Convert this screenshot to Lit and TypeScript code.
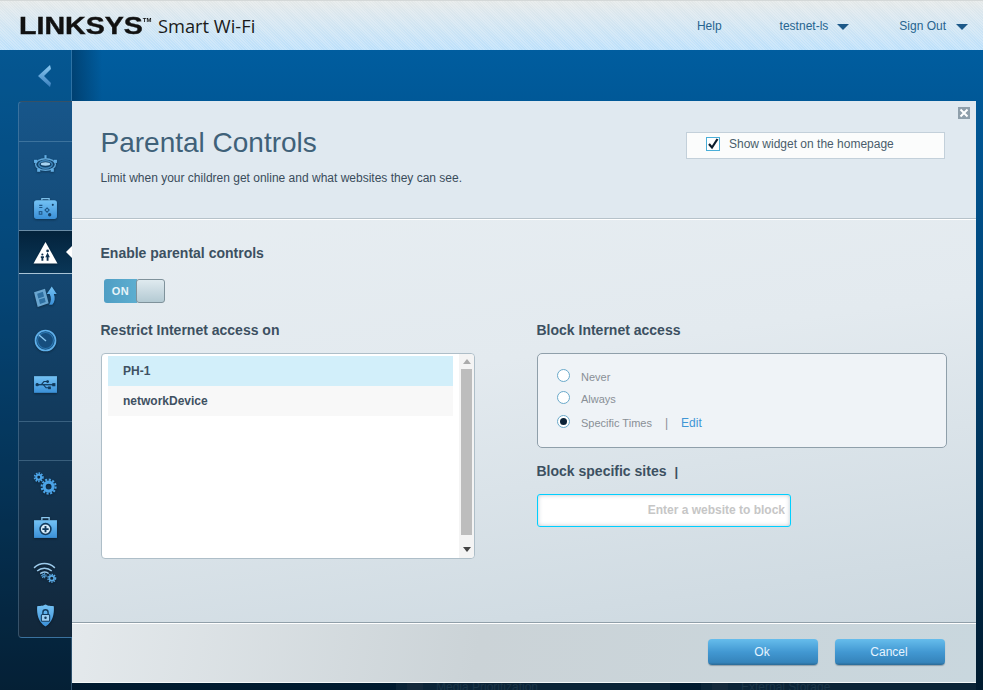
import { LitElement, html, css, svg } from 'lit';
import { customElement, state } from 'lit/decorators.js';
import { classMap } from 'lit/directives/class-map.js';

const defs = svg`
  <defs>
    <linearGradient id="blue" x1="0" y1="0" x2="0" y2="1">
      <stop offset="0" stop-color="#74c2f4" />
      <stop offset="1" stop-color="#3a90d8" />
    </linearGradient>
    <linearGradient id="chev" x1="0" y1="0" x2="0" y2="1">
      <stop offset="0" stop-color="#8ccaf2" />
      <stop offset="1" stop-color="#3a7fbe" />
    </linearGradient>
  </defs>
`;

// one drawing per nav row, all on a 24x24 box
const icons: Record<string, unknown> = {
  router: svg`
    <g fill="none" stroke="#5fa6d8" stroke-width="1.3">
      <ellipse cx="12" cy="12" rx="9.5" ry="5.5" />
      <ellipse cx="12" cy="12" rx="6.5" ry="3.6" stroke="#3f86bb" />
    </g>
    <ellipse cx="12" cy="11.5" rx="4.5" ry="1.6" fill="#a8d4f2" />
    <g fill="#62aee4">
      <rect x="11" y="3" width="2" height="3" />
      <rect x="1" y="7.5" width="3" height="3" />
      <rect x="20" y="7.5" width="3" height="3" />
      <rect x="4" y="16" width="3" height="3" />
      <rect x="17" y="16" width="3" height="3" />
    </g>`,
  case: svg`
    <path d="M8.5 4V2.5h7V4" fill="none" stroke="#7cbfe9" stroke-width="1.2" />
    <rect x="1" y="4" width="22" height="18" rx="2.5" fill="url(#blue)" />
    <g fill="none" stroke="#1d5586" stroke-width="1">
      <path d="M6 9h3M6 11h3" />
      <rect x="6" y="15" width="2.5" height="2.5" />
      <path d="M13.5 11.5l2 2-2 2-2-2z" />
    </g>
    <circle cx="16" cy="18" r="1.6" fill="#143f66" />
    <circle cx="19" cy="8.5" r="1" fill="#143f66" />`,
  kids: svg`
    <path d="M12 2L23.500 22.500H.5z" fill="#fff" />
    <circle cx="14" cy="10.500" r="1.300" fill="#10324e" />
    <path d="M14 12l2.200 4.500h-1.300v3.500h-1.800v-3.500h-1.300z" fill="#10324e" />
    <circle cx="9" cy="14" r="1" fill="#10324e" />
    <path d="M7.500 15.500h3v1.800h-.6V20H8.100v-2.700h-.6z" fill="#10324e" />`,
  media: svg`
    <path d="M1 8l10.500-3.500 3.500 14L4.500 22z" fill="#6aa6d0" />
    <g fill="#2f70a2">
      <path d="M4 9.300l5.500-1.800 1.100 4.500-5.500 1.800z" />
      <path d="M5.700 15l5.500-1.800 1 4.200-5.500 1.800z" />
    </g>
    <path d="M18.500 20c2.500-3 3-7 1.500-10.500h2.800L18 2.500l-4.800 7H16c1.800 3.500 1.500 7-.5 10.500z" fill="url(#blue)" />`,
  gauge: svg`
    <circle cx="12" cy="12" r="9.600" fill="#164e7e" stroke="#5fb0ea" stroke-width="1.600" />
    <circle cx="12" cy="12" r="7.600" fill="none" stroke="#2c78b2" stroke-width="1" />
    <path d="M5.500 6.500L12.500 12.500" stroke="#8cc8f0" stroke-width="1.300" />`,
  usb: svg`
    <rect x="1" y="4" width="22" height="16" fill="url(#blue)" />
    <g fill="#123a5c" stroke="#123a5c">
      <path d="M3 12.200h17" stroke-width="1.200" />
      <circle cx="4" cy="12.200" r="1.100" />
      <rect x="19" y="11.200" width="2" height="2" />
      <path d="M8 12.200l2.500-3h3" fill="none" stroke-width="1" />
      <path d="M10 12.200l2.500 3h2.500" fill="none" stroke-width="1" />
      <circle cx="14" cy="9.200" r=".9" />
      <rect x="15" y="14.400" width="1.600" height="1.600" />
    </g>`,
  gears: svg`
    <g fill="none" stroke="#4ba3e6">
      <circle cx="15" cy="15" r="4.300" stroke-width="3" />
      <circle cx="15" cy="15" r="6.700" stroke-width="2" stroke-dasharray="2 1.500" />
      <circle cx="5.500" cy="6" r="2.400" stroke-width="2" />
      <circle cx="5.500" cy="6" r="4" stroke-width="1.600" stroke-dasharray="1.500 1.100" />
    </g>`,
  kit: svg`
    <path d="M8.500 5V2.500h7V5" fill="none" stroke="#8cc8f0" stroke-width="1.200" />
    <rect x="1" y="5" width="22" height="17" fill="url(#blue)" />
    <circle cx="12" cy="13.500" r="5.200" fill="#d8ecfa" stroke="#123a5c" stroke-width="1.500" />
    <path d="M12 10.500v6M9 13.500h6" stroke="#123a5c" stroke-width="1.800" />`,
  wifi: svg`
    <g fill="none" stroke="#9ccbec" stroke-width="1.400">
      <path d="M1 8.500c6-5.500 14-5.500 20 0" />
      <path d="M4 11.500c4-3.500 10-3.500 14 0" />
      <path d="M7 14c2.500-2 6-2 8 0" />
    </g>
    <g fill="none" stroke="#5aa9e3">
      <circle cx="18" cy="18.500" r="2.300" stroke-width="1.600" />
      <circle cx="18" cy="18.500" r="3.700" stroke-width="1.300" stroke-dasharray="1.400 1" />
      <circle cx="10.500" cy="16" r="1.100" stroke-width="1" />
      <circle cx="10.500" cy="16" r="2.100" stroke-width="1" stroke-dasharray="1 .8" />
    </g>`,
  shield: svg`
    <path d="M4 3C8.500 3 10 2.500 12 1.500c2 1 3.500 1.500 8 1.500.5 8-1 15-8 19.500C5 18 3.500 11 4 3z" fill="url(#blue)" />
    <path d="M9.500 11V9a2.500 2.500 0 015 0v2" fill="none" stroke="#123a5c" stroke-width="1.300" />
    <rect x="8" y="11" width="8" height="6.500" rx="1" fill="#9ccdf0" stroke="#123a5c" stroke-width="1" />
    <circle cx="12" cy="14.200" r="1.200" fill="#123a5c" />`,
};

const navGroups = [
  { rows: ['router', 'case'] },
  { rows: ['kids'], selected: true },
  { rows: ['media', 'gauge', 'usb'], spaced: true },
  { rows: [], empty: true },
  { rows: ['gears', 'kit', 'wifi', 'shield'] },
];

const devices = ['PH-1', 'networkDevice'];
const blockModes = ['Never', 'Always', 'Specific Times'];

@customElement('app-root')
export class AppRoot extends LitElement {
  static styles = css`
    :host {
      display: block;
      position: relative;
      width: 983px;
      height: 690px;
      overflow: hidden;
      font-family: 'Liberation Sans', Arial, sans-serif;
      background: linear-gradient(#005d9f 50px, #00467a 300px, #001a2e 690px);
    }

    /* top bar */
    .topbar {
      display: flex;
      align-items: center;
      height: 50px;
      box-sizing: border-box;
      padding: 0 15px 0 19px;
      border-top: 1px solid #d4d8d8;
      background:
        repeating-linear-gradient(45deg, rgba(255, 255, 255, 0.22) 0 1px, transparent 1px 2px),
        linear-gradient(#e4e8e8, #d6e6f0 18px, #bce0fb);
    }
    .logo {
      display: inline-block;
      width: 122px;
      font-size: 24px;
      line-height: 24px;
      font-weight: 700;
      color: #111;
      -webkit-text-stroke: 0.4px #111;
      transform: scaleX(1.19);
      transform-origin: left center;
      white-space: nowrap;
    }
    .logo sup {
      font-size: 5px;
      line-height: 0;
      vertical-align: 12px;
      -webkit-text-stroke: 0;
    }
    .product {
      margin-left: 17px;
      font-family: 'Open Sans', sans-serif;
      font-size: 18.3px;
      color: #1a1a1a;
      flex: 1;
    }
    .toplink {
      display: flex;
      align-items: center;
      font-size: 12px;
      color: #27648f;
    }
    .toplink.help {
      margin-right: 58px;
    }
    .toplink.user {
      margin-right: 50px;
    }
    .toplink.user .caret {
      margin-left: 9px;
    }
    .caret {
      width: 0;
      height: 0;
      margin: 2px 0 0 10px;
      border: 6px solid transparent;
      border-top-color: #1c5888;
      border-bottom: 0;
    }

    /* page under the dialog */
    .page {
      display: flex;
      height: 640px;
    }
    .side {
      width: 72px;
      flex: none;
      box-sizing: border-box;
      border-right: 1px solid rgba(120, 170, 205, 0.35);
      background: rgba(30, 60, 90, 0.18);
    }
    .back {
      display: block;
      width: 13px;
      height: 22px;
      margin: 15px 0 14px 38px;
    }
    .nav {
      box-sizing: border-box;
      width: 54px;
      height: 537px;
      margin-left: 18px;
      border: 1px solid rgba(140, 180, 210, 0.3);
      border-right: 0;
      border-radius: 4px 0 0 4px;
      background: linear-gradient(#17568a, #123e63 50%, #12273a);
    }
    .nav-head {
      height: 39px;
    }
    .group {
      border-top: 1px solid rgba(150, 190, 215, 0.3);
    }
    .group.selected {
      position: relative;
      border-top-color: rgba(170, 200, 220, 0.6);
      border-bottom: 1px solid #a9c4d6;
      background: linear-gradient(#03233c, #0a3657);
    }
    .group.selected + .group {
      border-top: 0;
    }
    .group.selected::after {
      content: '';
      position: absolute;
      right: 0;
      top: 15px;
      border: 6px solid transparent;
      border-right-color: #fff;
      border-left: 0;
    }
    .group.spaced {
      padding-bottom: 15px;
    }
    .group.empty {
      height: 38px;
    }
    .row {
      display: flex;
      align-items: center;
      justify-content: center;
      height: 44px;
      padding-right: 1px;
    }
    .group.selected .row {
      height: 42px;
    }
    .row svg {
      width: 25px;
      height: 25px;
      filter: drop-shadow(0 1px 1px rgba(0, 0, 0, 0.35));
    }

    .main {
      flex: 1;
      padding-top: 630px;
      background: linear-gradient(90deg, rgba(0, 25, 50, 0.38), transparent 30px);
    }
    .widgets {
      display: grid;
      grid-template-columns: 274px 275px;
      justify-content: end;
      gap: 31px;
      padding-right: 7px;
    }
    .widget {
      height: 10px;
      padding-left: 40px;
      font-size: 12px;
      line-height: 14px;
      overflow: hidden;
      color: #1b3547;
      background: linear-gradient(#14293b, #14293b) 11px 0 / 16px 100% no-repeat, #0b2437;
    }

    /* dialog */
    .dialog {
      position: absolute;
      left: 72px;
      top: 101px;
      width: 904px;
      height: 582px;
      display: flex;
      flex-direction: column;
      border-radius: 2px;
      color: #3d5163;
      background: linear-gradient(172deg, #e9eff3 0%, #e3eaef 45%, #c8d5dd 100%);
    }
    .close {
      position: absolute;
      right: 6px;
      top: 6px;
      display: block;
      width: 12px;
      height: 12px;
    }
    .dialog-head {
      display: flex;
      justify-content: space-between;
      height: 118px;
      box-sizing: border-box;
      padding: 26px 31px 0 29px;
      background: #e0e9f0;
      border-bottom: 1px solid #b6c2ca;
      box-shadow: 0 1px 0 #fff;
    }
    h1 {
      margin: 0 0 0 -0.5px;
      font-size: 28px;
      line-height: 32px;
      font-weight: 400;
      color: #3f6179;
    }
    .lead {
      margin: 11px 0 0 -0.5px;
      font-size: 12px;
      line-height: 16px;
      color: #3a4c5b;
    }
    .widget-toggle {
      display: flex;
      align-items: center;
      box-sizing: border-box;
      width: 259px;
      height: 27px;
      margin-top: 5px;
      padding: 0 0 3px 19px;
      border: 1px solid #c3d0da;
      font-size: 12px;
      color: #4a5c6b;
      background: #fbfcfc;
      cursor: pointer;
    }
    .check {
      width: 12px;
      height: 12px;
      margin-right: 9px;
      border: 1px solid #4aaed8;
      background: #fff;
    }
    .check svg {
      display: block;
    }

    .body {
      flex: 1;
      display: grid;
      grid-template-columns: 374px 410px;
      column-gap: 62px;
      align-content: start;
      padding: 0 0 0 29px;
      margin-top: 1px;
    }
    h2 {
      margin: 0 0 0 -0.5px;
      font-size: 14px;
      line-height: 18px;
      font-weight: 700;
      color: #3c5061;
    }
    .enable {
      grid-column: 1 / -1;
      padding-top: 24px;
    }
    .switch {
      display: flex;
      width: 61px;
      height: 24px;
      margin: 17px 0 18px 3px;
      border-radius: 3px;
      cursor: pointer;
    }
    .switch span {
      width: 33px;
      font-size: 11px;
      line-height: 24px;
      font-weight: 700;
      letter-spacing: 0.4px;
      text-align: center;
      color: #e8f4f9;
      border-radius: 3px 0 0 3px;
      background: linear-gradient(90deg, #4f9ec4, #5daed0);
    }
    .switch i {
      flex: 1;
      margin-left: -1px;
      border: 1px solid #7f929b;
      border-radius: 3px;
      background: linear-gradient(#dfeaef, #b4cad3);
    }
    .switch.off span {
      background: #9aa9b2;
    }

    .list {
      display: flex;
      box-sizing: border-box;
      height: 206px;
      margin-top: 14px;
      border: 1px solid #aebec8;
      border-radius: 4px;
      background: #fff;
    }
    .items {
      flex: 1;
      padding: 2px 6px 0;
      min-width: 0;
    }
    .item {
      height: 30px;
      padding-left: 15px;
      font-size: 12px;
      line-height: 30px;
      font-weight: 700;
      color: #3f5162;
      background: #f8f8f8;
      cursor: pointer;
    }
    .item.active {
      background: #d2effa;
    }
    .scrollbar {
      display: flex;
      flex-direction: column;
      align-items: center;
      width: 15px;
      border-radius: 0 4px 4px 0;
      background: #f4f4f4;
    }
    .thumb {
      flex: 1;
      width: 11px;
      margin: 5px 0 12px;
      background: #bdbdbd;
    }
    .arrow-up,
    .arrow-down {
      width: 0;
      height: 0;
      border: 4px solid transparent;
    }
    .arrow-up {
      margin-top: 5px;
      border-top: 0;
      border-bottom: 5px solid #ababab;
    }
    .arrow-down {
      margin-bottom: 6px;
      border-bottom: 0;
      border-top: 5px solid #444;
    }

    .modes {
      box-sizing: border-box;
      height: 95px;
      margin-top: 14px;
      padding: 12px 19px 0;
      border: 1px solid #8f9faa;
      border-radius: 5px;
      background: #eff3f7;
    }
    .mode {
      display: flex;
      align-items: center;
      height: 22px;
      font-size: 11px;
      color: #898f96;
      cursor: pointer;
    }
    .mode:last-child {
      margin-top: 2px;
    }
    .radio {
      box-sizing: border-box;
      display: flex;
      align-items: center;
      justify-content: center;
      width: 13px;
      height: 13px;
      margin: -3px 11px 0 0;
      border: 1px solid #6aa9ca;
      border-radius: 50%;
      background: #fff;
    }
    .radio.on::before {
      content: '';
      width: 7px;
      height: 7px;
      border-radius: 50%;
      background: #0c2237;
    }
    .sep {
      margin: 0 13px;
      font-size: 12px;
    }
    .edit {
      font-size: 12px;
      color: #3f96d6;
      text-decoration: none;
    }
    .sites {
      margin-top: 14px;
    }
    .cursor {
      margin-left: 8px;
      font-size: 13px;
    }
    input {
      display: block;
      box-sizing: border-box;
      width: 254px;
      height: 33px;
      margin-top: 13px;
      padding: 0 5px 2px;
      border: 1px solid #00cfff;
      border-radius: 3px;
      outline: 0;
      font: 700 12px 'Liberation Sans', Arial, sans-serif;
      text-align: right;
      background: #fff;
      box-shadow: inset 0 0 4px rgba(120, 140, 155, 0.5);
    }
    input::placeholder {
      color: #c6c6c6;
      opacity: 1;
    }

    .foot {
      display: flex;
      justify-content: flex-end;
      gap: 17px;
      height: 61px;
      box-sizing: border-box;
      padding: 16px 31px 0 0;
      border-top: 1px solid #909fa9;
      border-bottom: 1px solid #f4f7f8;
      box-shadow: inset 0 1px 0 #fff;
      background: linear-gradient(100deg, #e4e9ec 0%, #cbd3d7 45%, #c9d7de 100%);
    }
    button {
      width: 110px;
      height: 26px;
      padding: 0 2px 0 0;
      border: 0;
      border-radius: 4px;
      font: 12px 'Liberation Sans', Arial, sans-serif;
      color: #e6f4ff;
      background: linear-gradient(#66bdec, #4298d2 50%, #3584bb 90%, #2b6a96);
      box-shadow: 0 1px 1px rgba(60, 80, 95, 0.4);
      cursor: pointer;
    }
  `;

  @state() private enabled = true;
  @state() private showWidget = true;
  @state() private device = 0;
  @state() private mode = 2;

  private renderIcon(name: string) {
    return html`<svg viewBox="0 0 24 24">${icons[name]}</svg>`;
  }

  render() {
    return html`
      <header class="topbar">
        <span class="logo">LINKSYS<sup>TM</sup></span>
        <span class="product">Smart Wi-Fi</span>
        <span class="toplink help">Help</span>
        <span class="toplink user">testnet-ls<i class="caret"></i></span>
        <span class="toplink">Sign Out<i class="caret"></i></span>
      </header>

      <div class="page">
        <aside class="side">
          <svg class="back" viewBox="0 0 13 22">
            ${defs}
            <path d="M12 0L0 11l12 11 1-4L6 11l7-7z" fill="url(#chev)" />
          </svg>
          <nav class="nav">
            <div class="nav-head"></div>
            ${navGroups.map(
              (g) => html`
                <div
                  class=${classMap({
                    group: true,
                    selected: !!g.selected,
                    spaced: !!g.spaced,
                    empty: !!g.empty,
                  })}
                >
                  ${g.rows.map((r) => html`<div class="row">${this.renderIcon(r)}</div>`)}
                </div>
              `
            )}
          </nav>
        </aside>
        <main class="main">
          <div class="widgets">
            <div class="widget">Media Prioritization</div>
            <div class="widget">External Storage</div>
          </div>
        </main>
      </div>

      <section class="dialog">
        <svg class="close" viewBox="0 0 12 12">
          <rect width="12" height="12" fill="#8f9fab" />
          <path d="M2.500 2.500l7 7M9.500 2.500l-7 7" stroke="#fff" stroke-width="2" />
        </svg>
        <div class="dialog-head">
          <div>
            <h1>Parental Controls</h1>
            <p class="lead">Limit when your children get online and what websites they can see.</p>
          </div>
          <div class="widget-toggle" @click=${() => (this.showWidget = !this.showWidget)}>
            <div class="check">
              ${this.showWidget
                ? html`<svg viewBox="0 0 12 12" width="12" height="12">
                    <path d="M2 6l3 3.500L10.500 1" fill="none" stroke="#0c1c2c" stroke-width="2.200" />
                  </svg>`
                : ''}
            </div>
            Show widget on the homepage
          </div>
        </div>

        <div class="body">
          <div class="enable">
            <h2>Enable parental controls</h2>
            <div
              class=${classMap({ switch: true, off: !this.enabled })}
              @click=${() => (this.enabled = !this.enabled)}
            >
              <span>${this.enabled ? 'ON' : 'OFF'}</span><i></i>
            </div>
          </div>

          <div>
            <h2>Restrict Internet access on</h2>
            <div class="list">
              <div class="items">
                ${devices.map(
                  (d, i) => html`
                    <div
                      class=${classMap({ item: true, active: i === this.device })}
                      @click=${() => (this.device = i)}
                    >
                      ${d}
                    </div>
                  `
                )}
              </div>
              <div class="scrollbar">
                <div class="arrow-up"></div>
                <div class="thumb"></div>
                <div class="arrow-down"></div>
              </div>
            </div>
          </div>

          <div>
            <h2>Block Internet access</h2>
            <div class="modes">
              ${blockModes.map(
                (m, i) => html`
                  <div class="mode" @click=${() => (this.mode = i)}>
                    <div class=${classMap({ radio: true, on: i === this.mode })}></div>
                    ${m}
                    ${i === 2
                      ? html`<span class="sep">|</span><a class="edit" href="#">Edit</a>`
                      : ''}
                  </div>
                `
              )}
            </div>
            <h2 class="sites">Block specific sites<span class="cursor">|</span></h2>
            <input placeholder="Enter a website to block" />
          </div>
        </div>

        <div class="foot">
          <button>Ok</button>
          <button>Cancel</button>
        </div>
      </section>
    `;
  }
}
